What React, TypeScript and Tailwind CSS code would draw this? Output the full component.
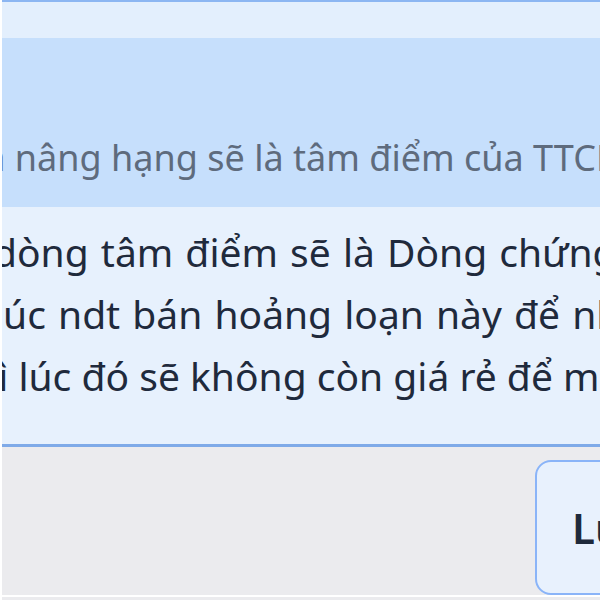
import React from "react";

export default function App() {
  const font = { fontFamily: '"Noto Sans", "Open Sans", sans-serif' };
  return (
    <div
      className="w-[600px] h-[600px] overflow-hidden bg-[#ebebee] flex flex-col border-l-2 border-white"
      style={font}
    >
      <div className="h-[2px] bg-[#8cb6f2] shrink-0" />
      <div className="h-[36px] bg-[#e3effd] shrink-0" />
      <div className="h-[169px] bg-[#c6dffc] shrink-0 pt-[89px] overflow-hidden">
        <div className="whitespace-nowrap text-[36px] leading-[62px] text-[#5e6b7d] ml-[-35px]">
          và nâng hạng sẽ là tâm điểm của TTCK
        </div>
      </div>
      <div className="h-[237px] bg-[#e7f1fd] shrink-0 pt-[14px] overflow-hidden text-[39px] leading-[62px] text-[#1f2a3c]">
        <div className="whitespace-nowrap ml-[-9px] [word-spacing:2px]">dòng tâm điểm sẽ là Dòng chứng khoán</div>
        <div className="whitespace-nowrap ml-[-9px] [word-spacing:2px]">lúc ndt bán hoảng loạn này để nhặt hàng</div>
        <div className="whitespace-nowrap ml-[-42px]">thì lúc đó sẽ không còn giá rẻ để mua</div>
      </div>
      <div className="h-[3px] bg-[#7faae8] shrink-0" />
      <div className="h-[148px] shrink-0 flex items-start pt-[13px] overflow-hidden">
        <div className="ml-[533px] h-[135px] w-[200px] shrink-0 rounded-[16px] border-2 border-[#8ab4f8] bg-[#e8f1fd] flex items-center pl-[35px] text-[42px] font-semibold text-[#1e293b]">
          Lưu
        </div>
      </div>
      <div className="h-[2px] bg-white shrink-0" />
    </div>
  );
}
